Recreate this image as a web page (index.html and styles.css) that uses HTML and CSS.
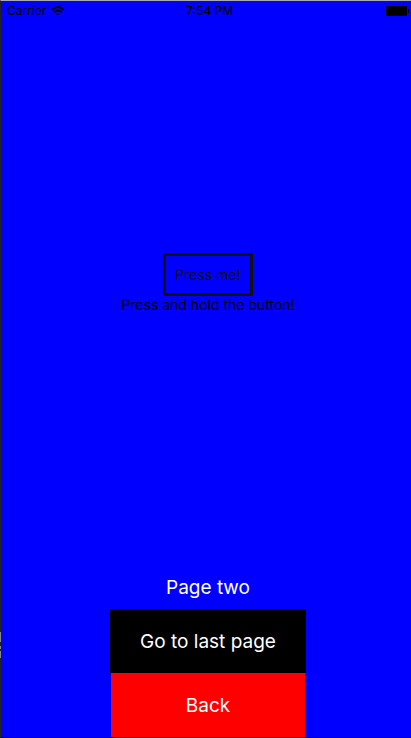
FILE: index.html
```
<!DOCTYPE html>
<html lang="en">
<head>
<meta charset="utf-8">
<meta name="viewport" content="width=device-width, initial-scale=1">
<title>Page two</title>
<link rel="stylesheet" href="styles.css">
</head>
<body>
<div class="screen">
  <header class="status">
    <div class="carrier">
      <span>Carrier</span>
      <svg class="wifi" viewBox="0 0 13 10" aria-hidden="true">
        <path d="M.6 3.8Q6.5-1.8 12.4 3.8M2.8 6.1Q6.5 2.8 10.2 6.1" fill="none" stroke="#000" stroke-width="1.8"/>
        <path d="M4.5 7.6Q6.5 5.9 8.5 7.6L6.5 9.8Z"/>
      </svg>
    </div>
    <time class="clock">7:54 PM</time>
    <svg class="battery" viewBox="0 0 24 10" aria-hidden="true">
      <rect width="21" height="10" rx="1"/>
      <path d="M22 3h1v4h-1z"/>
    </svg>
  </header>
  <main class="content">
    <button class="press" type="button">Press me!</button>
    <p class="hint">Press and hold the button!</p>
  </main>
  <footer class="pager">
    <h1 class="title">Page two</h1>
    <button class="nav last" type="button">Go to last page</button>
    <button class="nav back" type="button">Back</button>
  </footer>
</div>
</body>
</html>
```
FILE: styles.css
```
* {
  box-sizing: border-box;
}

body {
  margin: 0;
  font-family: Inter, "Liberation Sans", sans-serif;
}

.screen {
  position: relative;
  display: flex;
  flex-direction: column;
  min-height: 100vh;
  padding-left: 4px;
  border-top: 1px solid #a9a9b2;
  border-left: 1px solid #222;
  border-bottom: 1px solid #180808;
  background: #00f;
}

/* Light marks on the window's left edge */
.screen::before {
  content: "";
  position: absolute;
  bottom: 79px;
  left: -1px;
  width: 1px;
  height: 26px;
  background: linear-gradient(#888 10px, #222 10px 14px, #888 14px 17px, #222 17px 19px, #888 19px);
}

.status {
  display: grid;
  grid-template-columns: 1fr auto 1fr;
  align-items: center;
  height: 20px;
  padding: 0 1px 0 2px;
  font-size: 12px;
  line-height: 20px;
}

.carrier {
  display: flex;
  align-items: center;
  gap: 5px;
}

.wifi {
  width: 13px;
  height: 10px;
}

.clock {
  padding-left: 2px;
  font-weight: 500;
}

.battery {
  justify-self: end;
  width: 24px;
  height: 10px;
}

.content {
  display: flex;
  flex: 1;
  flex-direction: column;
  align-items: center;
  justify-content: center;
  padding-bottom: 20px;
}

.press {
  padding: 10px 9px;
  border: 3px solid #111;
  background: none;
  color: #111;
  font: 14px/17px Inter, "Liberation Sans", sans-serif;
}

.hint {
  margin: 0;
  font-size: 14px;
  line-height: 18px;
}

.pager {
  display: flex;
  flex-direction: column;
  align-items: center;
}

.title {
  margin: 0;
  padding: 11px 0 9px;
  color: #fff;
  font-size: 19px;
  font-weight: 400;
  line-height: 24px;
}

.nav {
  padding: 21px 30px 19px;
  border: 0;
  color: #fff;
  font: 19px/24px Inter, "Liberation Sans", sans-serif;
}

.last {
  background: #000;
}

.back {
  min-width: 194px;
  background: #f00;
}
```
